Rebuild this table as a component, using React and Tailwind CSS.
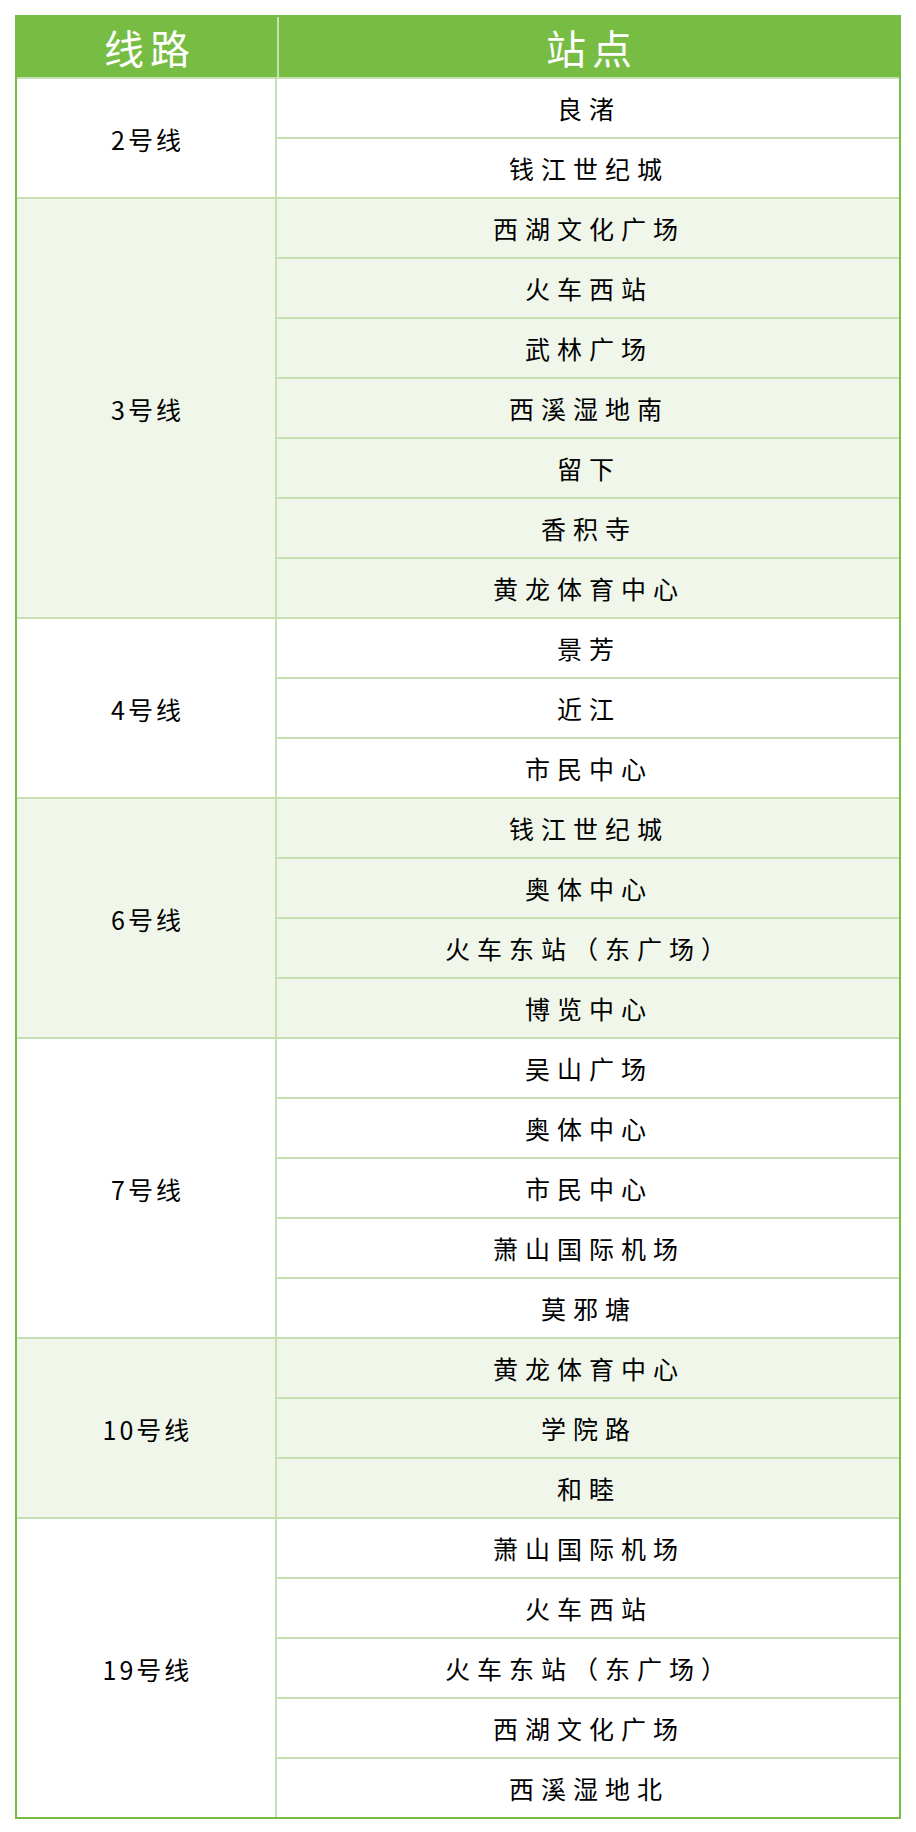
import React from 'react';

const lines = [
    { name: '2号线', tint: false, stations: ['良渚', '钱江世纪城'] },
    { name: '3号线', tint: true, stations: ['西湖文化广场', '火车西站', '武林广场', '西溪湿地南', '留下', '香积寺', '黄龙体育中心'] },
    { name: '4号线', tint: false, stations: ['景芳', '近江', '市民中心'] },
    { name: '6号线', tint: true, stations: ['钱江世纪城', '奥体中心', '火车东站（东广场）', '博览中心'] },
    { name: '7号线', tint: false, stations: ['吴山广场', '奥体中心', '市民中心', '萧山国际机场', '莫邪塘'] },
    { name: '10号线', tint: true, stations: ['黄龙体育中心', '学院路', '和睦'] },
    { name: '19号线', tint: false, stations: ['萧山国际机场', '火车西站', '火车东站（东广场）', '西湖文化广场', '西溪湿地北'] },
];

const font = { fontFamily: '"Noto Sans CJK SC", "Noto Sans", sans-serif' };

export default function App() {
    return (
        <div className="bg-white p-[15px] w-[916px] min-h-[1832px]" style={font}>
            <div className="w-[886px] border-2 border-[#77bc43]">
                {/* header */}
                <div className="flex h-[60px] bg-[#77bc43] text-white">
                    <div className="w-[260px] flex items-center justify-center text-[40px] tracking-[6px] pl-[6px] leading-none">
                        线路
                    </div>
                    <div className="w-[2px] bg-[#c5e0b3]"></div>
                    <div className="flex-1 flex items-center justify-center text-[40px] tracking-[6px] pl-[6px] leading-none">
                        站点
                    </div>
                </div>

                {lines.map((line) => (
                    <div
                        key={line.name}
                        className={
                            line.tint
                                ? 'flex border-t-2 border-[#c5e0b3] bg-[#f0f7ea]'
                                : 'flex border-t-2 border-[#c5e0b3] bg-white'
                        }
                    >
                        <div className="w-[260px] flex items-center justify-center border-r-2 border-[#c5e0b3] text-[25px] tracking-[3px] pl-[3px] text-black pt-[4px]">
                            {line.name}
                        </div>
                        <div className="flex-1 flex flex-col">
                            {line.stations.map((s, i) => (
                                <div
                                    key={i}
                                    className="h-[60px] flex items-center justify-center border-b-2 border-[#c5e0b3] last:border-b-0 last:h-[58px] text-[25px] tracking-[7px] pl-[2px] text-black pt-[2px]"
                                >
                                    {s}
                                </div>
                            ))}
                        </div>
                    </div>
                ))}
            </div>
        </div>
    );
}
